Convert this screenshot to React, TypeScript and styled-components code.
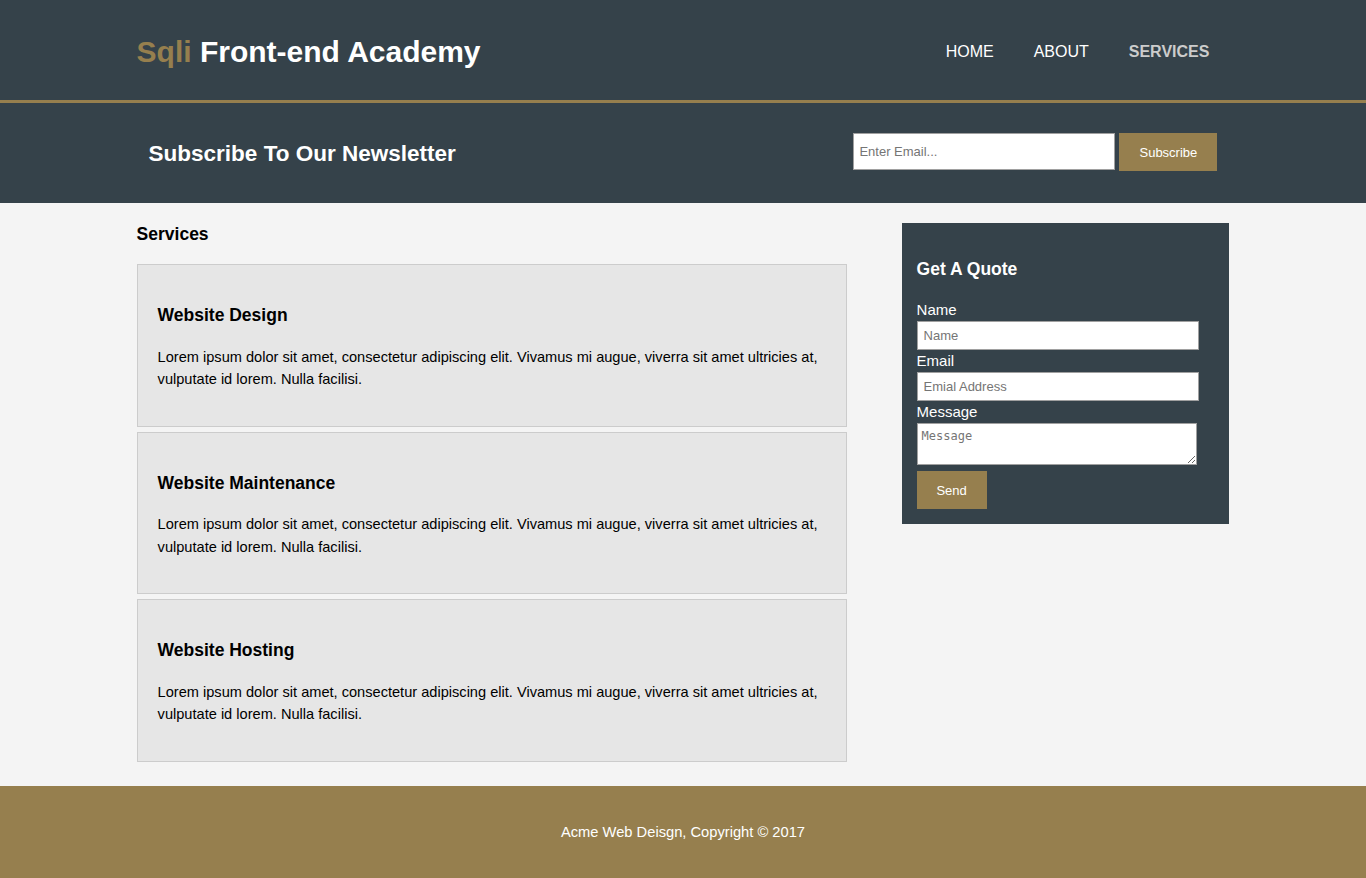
import React from 'react'
import styled, { createGlobalStyle } from 'styled-components'

const GOLD = '#967f4e'
const SLATE = '#35424a'

const GlobalStyle = createGlobalStyle`
  body {
    margin: 0;
    padding: 0;
    font-family: "Liberation Sans", Arial, sans-serif;
    font-size: 15px;
    line-height: 1.5;
    background: #f4f4f4;
    color: #000;
  }
  * { box-sizing: border-box; }
`

const Container = styled.div`
  width: 80%;
  margin: 0 auto;
`

const Header = styled.header`
  background: ${SLATE};
  color: #fff;
  border-bottom: 3px solid ${GOLD};
`

const HeaderInner = styled(Container)`
  height: 100px;
  padding-top: 4px;
  display: flex;
  align-items: center;
  justify-content: space-between;
`

const Logo = styled.h1`
  margin: 0;
  font-size: 30px;
  font-weight: bold;
  line-height: 1;
`

const Highlight = styled.span`
  color: ${GOLD};
`

const Nav = styled.ul`
  display: flex;
  margin: 0;
  padding: 0;
  list-style: none;
`

const NavItem = styled.li<{ $current?: boolean }>`
  padding: 0 20px;
  font-size: 16px;
  text-transform: uppercase;
  color: ${p => (p.$current ? '#cccccc' : '#fff')};
  font-weight: ${p => (p.$current ? 'bold' : 'normal')};
`

const Newsletter = styled.section`
  background: ${SLATE};
  color: #fff;
  padding: 15px;
`

const NewsletterInner = styled(Container)`
  height: 70px;
  display: flex;
  align-items: center;
  justify-content: space-between;
`

const NewsTitle = styled.h1`
  margin: 0;
  padding-top: 2px;
  font-size: 22.5px;
  line-height: 1;
`

const NewsForm = styled.form`
  align-self: flex-start;
  margin-top: 15px;
  display: flex;
  gap: 4px;
  align-items: flex-start;
`

const EmailInput = styled.input`
  width: 262px;
  height: 37px;
  padding: 4px 5px;
  border: 1px solid #a0a0a0;
  font-family: "Liberation Sans", Arial, sans-serif;
  font-size: 13px;
  &::placeholder { color: #757575; }
`

const GoldButton = styled.button<{ $w: number }>`
  width: ${p => p.$w}px;
  height: 38px;
  background: ${GOLD};
  color: #fff;
  border: 0;
  font-family: "Liberation Sans", Arial, sans-serif;
  font-size: 13px;
  padding: 0;
`

const Content = styled(Container)`
  display: flex;
  justify-content: space-between;
  align-items: flex-start;
`

const Main = styled.section`
  width: 65%;
`

const PageTitle = styled.h1`
  font-size: 17.5px;
  line-height: 22px;
  margin: 20px 0 19px;
`

const Article = styled.article`
  background: #e6e6e6;
  border: 1px solid #ccc;
  padding: 20px;
  margin-bottom: 5px;
`

const ArticleTitle = styled.h3`
  font-size: 17.5px;
  line-height: 25.5px;
  margin: 18px 0 17px;
`

const ArticleText = styled.p`
  margin: 15px 0;
  font-size: 14.6px;
  line-height: 22.5px;
`

const Sidebar = styled.aside`
  width: 30%;
  margin-top: 20px;
  background: ${SLATE};
  color: #fff;
  padding: 15px;
`

const SidebarTitle = styled.h3`
  font-size: 17.5px;
  margin: 17.5px 0;
`

const Label = styled.label`
  display: block;
  line-height: 22px;
`

const Field = styled.input`
  display: block;
  width: 282px;
  height: 29px;
  padding: 5px 6px;
  border: 1px solid #a0a0a0;
  font-family: "Liberation Sans", Arial, sans-serif;
  font-size: 13px;
  &::placeholder { color: #757575; }
`

const MessageArea = styled.textarea`
  display: block;
  width: 280px;
  height: 42px;
  padding: 5px 4px;
  border: 1px solid #a0a0a0;
  font-family: "DejaVu Sans Mono", monospace;
  font-size: 12px;
  &::placeholder { color: #757575; }
`

const SendButton = styled(GoldButton)`
  display: block;
  margin-top: 6px;
`

const Footer = styled.footer`
  margin-top: 19px;
  padding: 20px;
  background: ${GOLD};
  color: #fff;
  text-align: center;
`

const FooterText = styled.p`
  margin: 15px 0;
  font-size: 14.7px;
`

const lorem =
  'Lorem ipsum dolor sit amet, consectetur adipiscing elit. Vivamus mi augue, viverra sit amet ultricies at, vulputate id lorem. Nulla facilisi.'

const services = ['Website Design', 'Website Maintenance', 'Website Hosting']

export default function App() {
  return (
    <>
      <GlobalStyle />
      <Header>
        <HeaderInner>
          <Logo>
            <Highlight>Sqli</Highlight> Front-end Academy
          </Logo>
          <nav>
            <Nav>
              <NavItem>Home</NavItem>
              <NavItem>About</NavItem>
              <NavItem $current>Services</NavItem>
            </Nav>
          </nav>
        </HeaderInner>
      </Header>

      <Newsletter>
        <NewsletterInner>
          <NewsTitle>Subscribe To Our Newsletter</NewsTitle>
          <NewsForm onSubmit={e => e.preventDefault()}>
            <EmailInput type="email" placeholder="Enter Email..." />
            <GoldButton $w={98} type="submit">Subscribe</GoldButton>
          </NewsForm>
        </NewsletterInner>
      </Newsletter>

      <Content>
        <Main>
          <PageTitle>Services</PageTitle>
          {services.map(s => (
            <Article key={s}>
              <ArticleTitle>{s}</ArticleTitle>
              <ArticleText>{lorem}</ArticleText>
            </Article>
          ))}
        </Main>
        <Sidebar>
          <SidebarTitle>Get A Quote</SidebarTitle>
          <form onSubmit={e => e.preventDefault()}>
            <Label>Name</Label>
            <Field type="text" placeholder="Name" />
            <Label>Email</Label>
            <Field type="email" placeholder="Emial Address" />
            <Label>Message</Label>
            <MessageArea placeholder="Message" />
            <SendButton $w={70} type="submit">Send</SendButton>
          </form>
        </Sidebar>
      </Content>

      <Footer>
        <FooterText>Acme Web Deisgn, Copyright &copy; 2017</FooterText>
      </Footer>
    </>
  )
}
